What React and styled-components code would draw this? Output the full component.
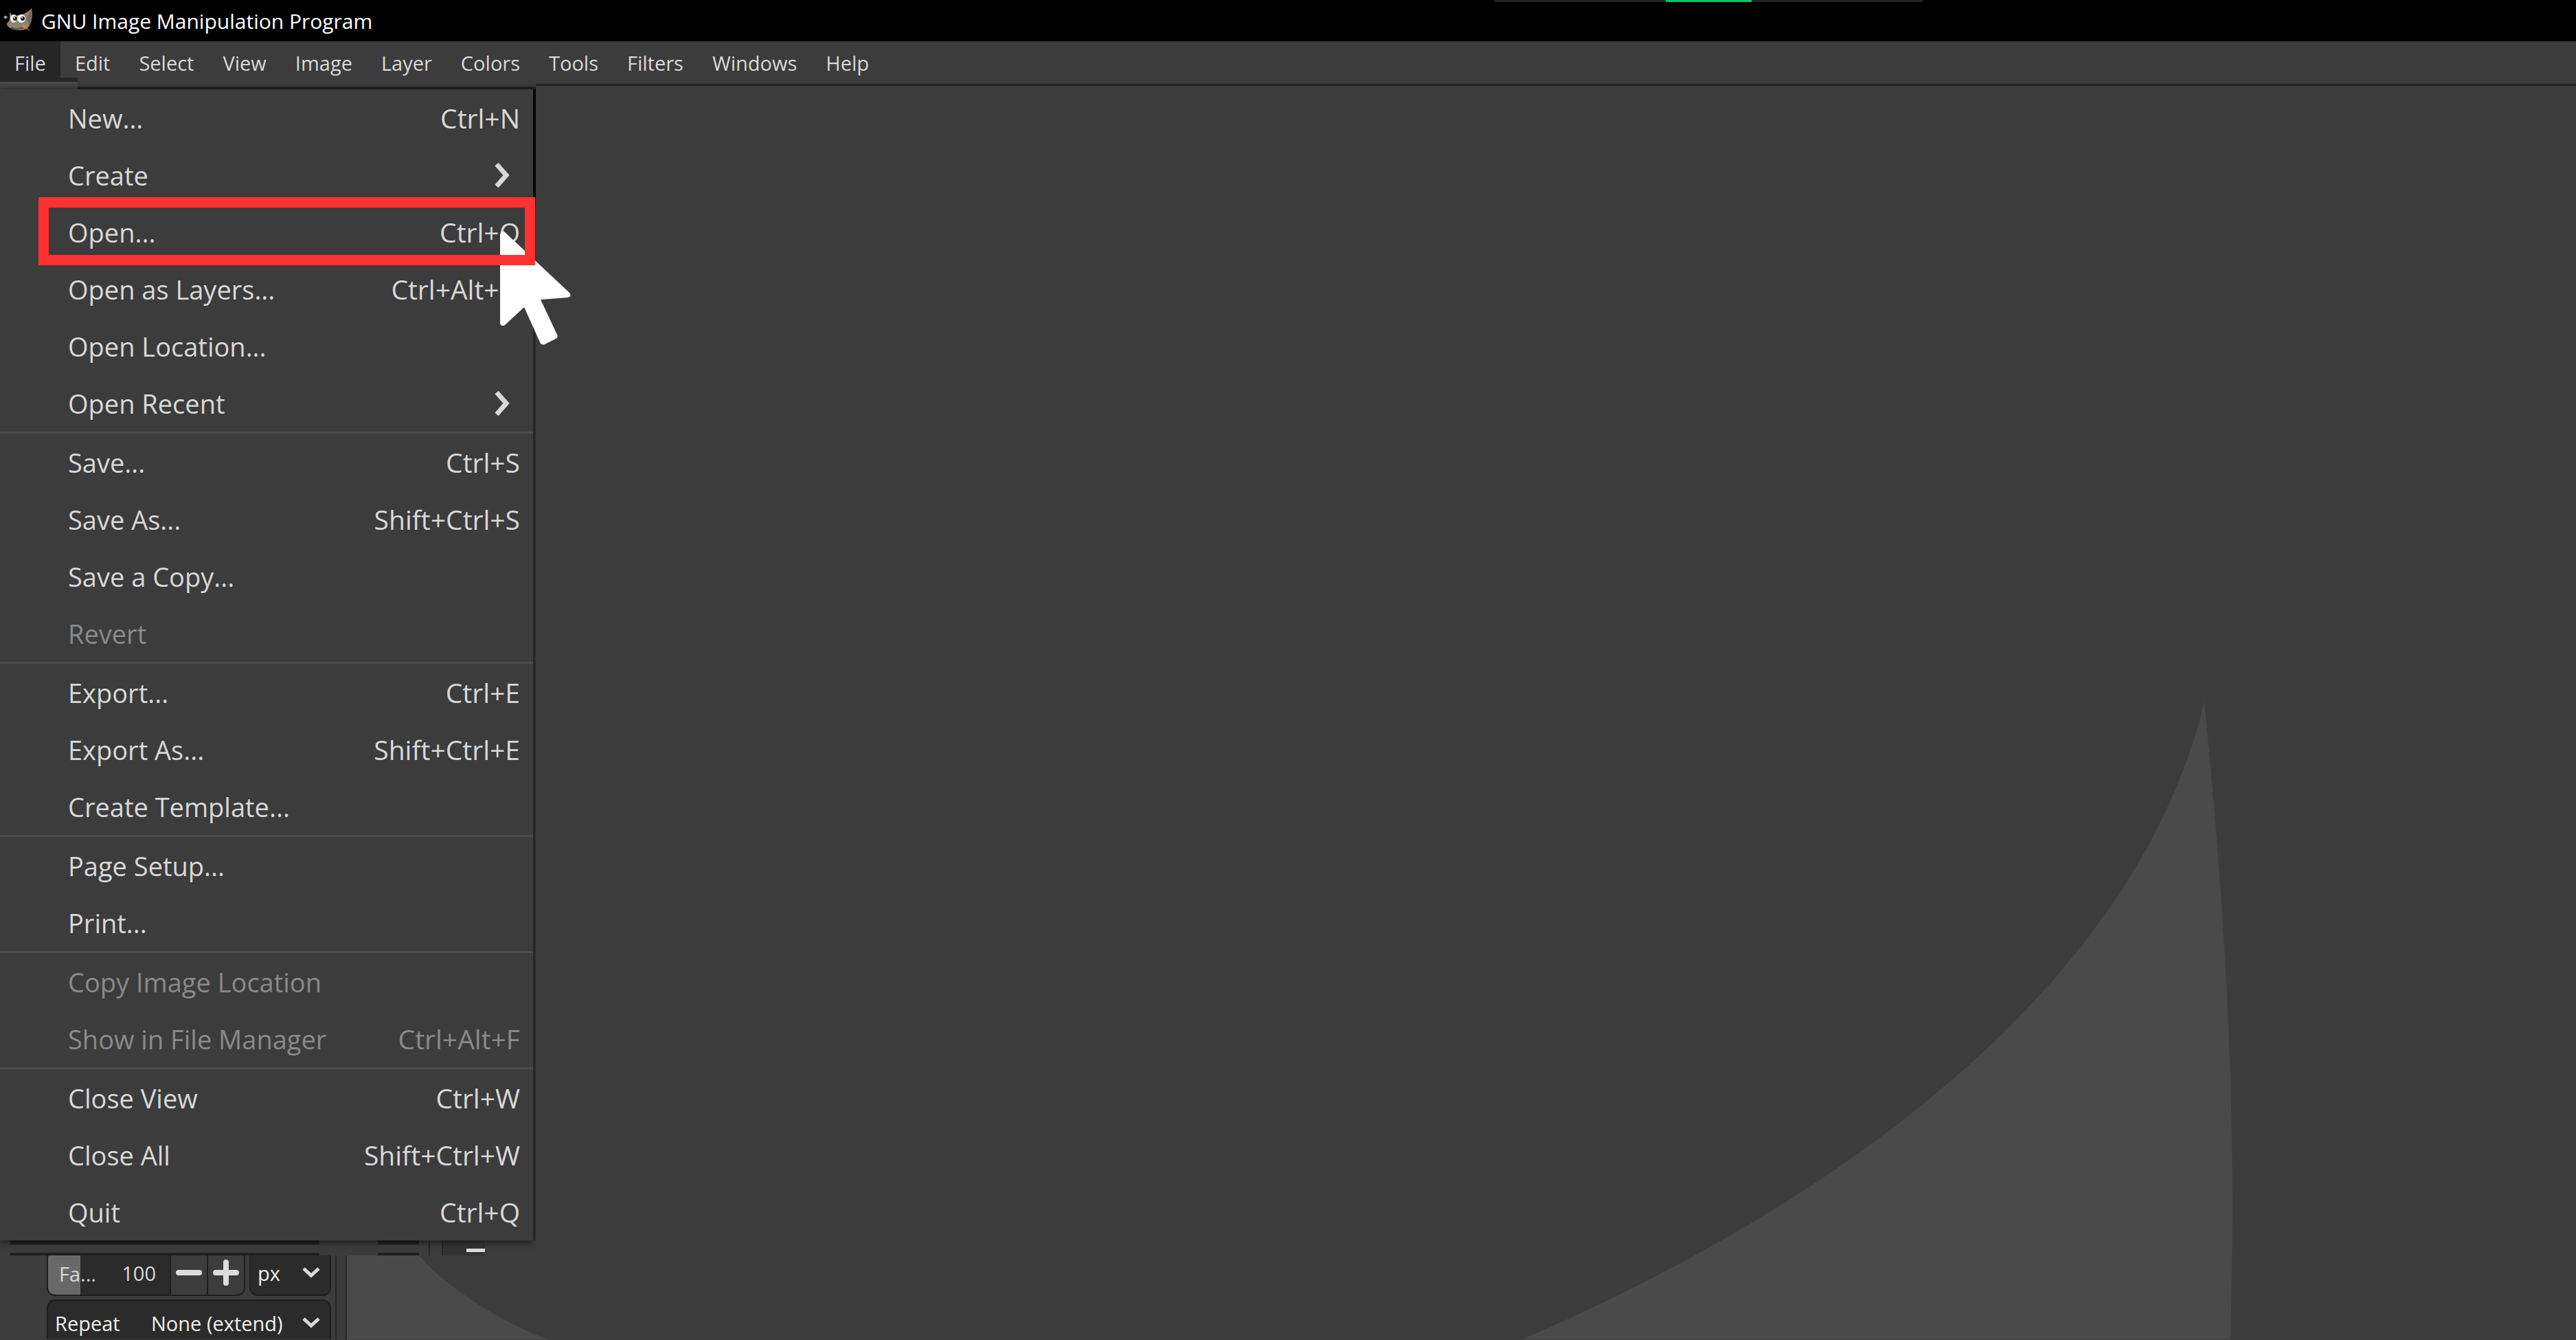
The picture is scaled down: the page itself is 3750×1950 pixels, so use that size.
import styled, { createGlobalStyle } from "styled-components";

const GlobalStyle = createGlobalStyle`
  * {
    box-sizing: border-box;
  }

  body {
    margin: 0;
    background: #3c3c3c;
    color: #d8d8d8;
    font-family: "Open Sans", "Noto Sans", sans-serif;
  }

  button,
  input,
  select {
    font-family: inherit;
    color: inherit;
    border: 0;
    margin: 0;
    padding: 0;
    background: none;
  }
`;

const Window = styled.div`
  position: relative;
  display: flex;
  flex-direction: column;
  height: 100vh;
  overflow: hidden;
  border-bottom: 1px solid #433b3e;
`;

const TitleBar = styled.header`
  display: flex;
  align-items: center;
  gap: 12px;
  height: 60px;
  flex-shrink: 0;
  padding-left: 4px;
  background: #000;
`;

const Title = styled.h1`
  margin: 0;
  font-size: 30px;
  font-weight: 400;
  color: #fff;
`;

// Recorder handle that peeks in over the top edge of the window
const Handle = styled.div`
  position: absolute;
  top: 0;
  left: 58%;
  width: 624px;
  height: 3px;
  background: #222;
`;

const HandleGrip = styled.div`
  width: 125px;
  height: 3px;
  margin: 0 auto;
  background: #05c768;
`;

const MenuBar = styled.nav`
  display: flex;
  height: 65px;
  flex-shrink: 0;
  border-bottom: 3px solid #222;
`;

const MenuBarItem = styled.button`
  padding: 0 21px;
  font-size: 29px;
  background: ${(props) => (props.$open ? "#262626" : "transparent")};
`;

// Everything that drops down from "File" hangs in this box
const Popup = styled.div`
  position: absolute;
  top: 113px;
  left: 0;
  width: 780px;
  overflow: hidden;
  background: #3c3c3c;
`;

const PopupHead = styled.div`
  display: flex;
  height: 17px;
`;

const HeadTab = styled.div`
  width: 113px;
  border-top: 6px solid #262626;
  background: linear-gradient(#4a4a4a, #3e3e3e);
`;

const HeadLine = styled.div`
  flex: 1;
  border-bottom: 4px solid #222;
`;

const MenuRow = styled.div`
  display: flex;
`;

const MenuEdge = styled.div`
  width: 4px;
  background: linear-gradient(#080808 160px, #333 172px);
`;

const Menu = styled.div`
  position: relative;
  flex: 1;
  box-shadow: 0 2px 10px rgba(0, 0, 0, 0.6);
`;

const Group = styled.div`
  & + & {
    border-top: 3px solid #4a4a4a;
  }
`;

const MenuItem = styled.button`
  position: relative;
  display: flex;
  align-items: center;
  justify-content: space-between;
  width: 100%;
  height: 83px;
  padding: 0 19px 0 99px;
  font-size: 38px;
  text-align: left;

  &:disabled {
    color: #8a8a8a;
  }
`;

const Shortcut = styled.span`
  font-size: 39px;
`;

const SubmenuIcon = styled.svg`
  width: 26px;
  height: 38px;
  margin-right: 12px;
`;

const Highlight = styled.span`
  position: absolute;
  inset: -9px -3px -7px 56px;
  z-index: 1;
  border: 15px solid #ff3131;
`;

const Pointer = styled.svg`
  position: absolute;
  top: 336px;
  left: 728px;
  width: 104px;
  height: 167px;
`;

// Slice of the tool options that stays visible right under the menu
const Peek = styled.div`
  display: flex;
  height: 22px;
  padding-left: 15px;
`;

const PeekField = styled.div`
  width: ${(props) => props.$width}px;
  margin-right: ${(props) => props.$gap}px;
  border: solid #202020;
  border-width: 6px 0 4px;
`;

const PeekSplit = styled.div`
  width: 21px;
  border: solid #272727;
  border-width: 0 2px;
`;

const PeekTab = styled.div`
  display: flex;
  align-items: center;
  justify-content: flex-end;
  width: 61px;
  padding-top: 6px;
  background: #343434;
`;

const PeekDash = styled.span`
  width: 27px;
  height: 5px;
  background: #dcdcdc;
`;

const Body = styled.div`
  display: flex;
  flex: 1;
  min-height: 0;
`;

const Dock = styled.aside`
  display: flex;
  flex-direction: column;
  justify-content: flex-end;
  gap: 5px;
  width: 490px;
  flex-shrink: 0;
  padding: 0 6px 0 68px;
  margin-bottom: -10px;
  border-right: 2px solid #262626;
  font-size: 29px;
`;

const OptionRow = styled.div`
  display: flex;
  justify-content: space-between;
  height: 68px;
`;

const SpinBox = styled.div`
  display: flex;
  width: 289px;
  overflow: hidden;
  border: 2px solid #1e1e1e;
  border-radius: 12px;
  background: linear-gradient(90deg, #686868 47px, #2b2b2b 47px);
`;

const SpinLabel = styled.label`
  width: 70px;
  padding-left: 16px;
  line-height: 68px;
`;

const SpinInput = styled.input`
  flex: 1;
  width: 0;
  padding-right: 20px;
  font-size: 29px;
  text-align: right;
`;

const SpinButton = styled.button`
  display: flex;
  align-items: center;
  justify-content: center;
  width: 54px;
  border-left: 2px solid #1e1e1e;
  background: #3c3c3c;
`;

const ComboBox = styled.div`
  position: relative;
  display: flex;
  align-items: center;
  width: ${(props) => props.$width};
  border: 2px solid #1e1e1e;
  border-radius: 12px;
  background: #2b2b2b;
  color: #f0f0f0;
`;

const ComboLabel = styled.label`
  width: 138px;
  padding-left: 10px;
`;

const ComboSelect = styled.select`
  flex: 1;
  width: 0;
  height: 100%;
  padding-left: ${(props) => props.$indent}px;
  font-size: 29px;
  appearance: none;
`;

const ComboArrow = styled.svg`
  position: absolute;
  right: 12px;
  width: 30px;
  height: 20px;
  pointer-events: none;
`;

const Gutter = styled.div`
  width: 15px;
  flex-shrink: 0;
  border-right: 2px solid #262626;
`;

const Canvas = styled.main`
  flex: 1;
  min-width: 0;
`;

const Backdrop = styled.svg`
  display: block;
  width: 100%;
  height: 100%;
`;

const menus = [
  "File",
  "Edit",
  "Select",
  "View",
  "Image",
  "Layer",
  "Colors",
  "Tools",
  "Filters",
  "Windows",
  "Help",
];

const fileMenu = [
  [
    { label: "New...", keys: "Ctrl+N" },
    { label: "Create", submenu: true },
    { label: "Open...", keys: "Ctrl+O", marked: true },
    { label: "Open as Layers...", keys: "Ctrl+Alt+O" },
    { label: "Open Location..." },
    { label: "Open Recent", submenu: true },
  ],
  [
    { label: "Save...", keys: "Ctrl+S" },
    { label: "Save As...", keys: "Shift+Ctrl+S" },
    { label: "Save a Copy..." },
    { label: "Revert", disabled: true },
  ],
  [
    { label: "Export...", keys: "Ctrl+E" },
    { label: "Export As...", keys: "Shift+Ctrl+E" },
    { label: "Create Template..." },
  ],
  [{ label: "Page Setup..." }, { label: "Print..." }],
  [
    { label: "Copy Image Location", disabled: true },
    { label: "Show in File Manager", keys: "Ctrl+Alt+F", disabled: true },
  ],
  [
    { label: "Close View", keys: "Ctrl+W" },
    { label: "Close All", keys: "Shift+Ctrl+W" },
    { label: "Quit", keys: "Ctrl+Q" },
  ],
];

const Wilber = () => (
  <svg width="44" height="36" viewBox="0 0 44 36" aria-hidden="true">
    <path
      d="M10 5 C12 9 14 11 18 11 C27 10 36 7 42 0 C44 11 42 21 38 27 C34 32 24 33 16 31 C10 29 5 26 6 22 C9 20 10 17 10 14 Z"
      fill="#8d8375"
    />
    <path d="M42 0 C40 7 37 12 34 14 C37 19 38 23 37 28 C42 21 44 11 42 0 Z" fill="#756c60" />
    <ellipse cx="16" cy="15" rx="5" ry="6" fill="#e8e8e8" />
    <ellipse cx="27" cy="15" rx="6" ry="6" fill="#f4f4f4" />
    <circle cx="18" cy="15" r="3" fill="#1a1a1a" />
    <circle cx="29" cy="15" r="3" fill="#1a1a1a" />
    <circle cx="17" cy="14" r="1" fill="#fff" />
    <circle cx="28" cy="14" r="1" fill="#fff" />
    <path d="M12 28 C18 31 24 31 30 28" stroke="#5d554a" strokeWidth="2" fill="none" />
    <path d="M29 25 L35 29" stroke="#d9852b" strokeWidth="4" />
    <path d="M35 29 L39 32" stroke="#6d6559" strokeWidth="2" />
    <circle cx="4" cy="13" r="2" fill="#d6d6d6" />
    <path d="M1 13 H8" stroke="#777" strokeWidth="1" />
  </svg>
);

const Arrow = () => (
  <ComboArrow viewBox="0 0 30 20" aria-hidden="true">
    <path d="M4 4 L15 14 L26 4" fill="none" stroke="#d8d8d8" strokeWidth="5" />
  </ComboArrow>
);

const FileMenu = () => (
  <Popup>
    <PopupHead>
      <HeadTab />
      <HeadLine />
    </PopupHead>
    <MenuRow>
      <Menu role="menu" aria-label="File">
        {fileMenu.map((items) => (
          <Group key={items[0].label} role="group">
            {items.map((item) => (
              <MenuItem key={item.label} role="menuitem" disabled={item.disabled}>
                <span>{item.label}</span>
                {item.keys && <Shortcut>{item.keys}</Shortcut>}
                {item.submenu && (
                  <SubmenuIcon viewBox="0 0 26 38" aria-hidden="true">
                    <path d="M4 3 L18 19 L4 35" fill="none" stroke="#d8d8d8" strokeWidth="7" />
                  </SubmenuIcon>
                )}
                {item.marked && <Highlight />}
              </MenuItem>
            ))}
          </Group>
        ))}
      </Menu>
      <MenuEdge />
    </MenuRow>
    <Peek>
      <PeekField $width={450} $gap={85} />
      <PeekField $width={60} $gap={14} />
      <PeekSplit />
      <PeekTab>
        <PeekDash />
      </PeekTab>
    </Peek>
  </Popup>
);

const App = () => {
  return (
    <Window>
      <GlobalStyle />
      <TitleBar>
        <Wilber />
        <Title>GNU Image Manipulation Program</Title>
        <Handle>
          <HandleGrip />
        </Handle>
      </TitleBar>

      <MenuBar>
        {menus.map((name) => (
          <MenuBarItem key={name} $open={name === "File"}>
            {name}
          </MenuBarItem>
        ))}
      </MenuBar>

      <Body>
        <Dock>
          <OptionRow>
            <SpinBox>
              <SpinLabel htmlFor="fade">Fa...</SpinLabel>
              <SpinInput id="fade" type="text" defaultValue="100" />
              <SpinButton aria-label="Decrease">
                <svg width="38" height="38" viewBox="0 0 38 38">
                  <path d="M4 19 H34" stroke="#dcdcdc" strokeWidth="8" strokeLinecap="round" />
                </svg>
              </SpinButton>
              <SpinButton aria-label="Increase">
                <svg width="38" height="38" viewBox="0 0 38 38">
                  <path d="M4 19 H34 M19 4 V34" stroke="#dcdcdc" strokeWidth="8" strokeLinecap="round" />
                </svg>
              </SpinButton>
            </SpinBox>
            <ComboBox $width="119px">
              <ComboSelect $indent={10} aria-label="Unit">
                <option>px</option>
              </ComboSelect>
              <Arrow />
            </ComboBox>
          </OptionRow>
          <OptionRow>
            <ComboBox $width="100%">
              <ComboLabel htmlFor="repeat">Repeat</ComboLabel>
              <ComboSelect id="repeat" $indent={12}>
                <option>None (extend)</option>
              </ComboSelect>
              <Arrow />
            </ComboBox>
          </OptionRow>
        </Dock>
        <Gutter />
        <Canvas>
          {/* big Wilber silhouette, most of it below the window's edge */}
          <Backdrop viewBox="505 125 3245 1825" preserveAspectRatio="xMidYMax slice" aria-hidden="true">
            <path d="M505 1700 C545 1750 575 1790 610 1828 C640 1865 720 1922 798 1950 H505 Z" fill="#4a4a4a" />
            <path
              d="M3209 1022 C3112 1428 2690 1746 2216 1950 H3247 C3254 1683 3250 1440 3209 1022 Z"
              fill="#4a4a4a"
            />
          </Backdrop>
        </Canvas>
      </Body>

      <FileMenu />
      <Pointer viewBox="0 0 104 167" aria-hidden="true">
        <path
          d="M0 5 Q1 0 6 1 L101 90 Q105 96 98 97 L59 100 L83 151 Q85 155 81 157 L65 165 Q60 167 58 162 L35 111 L7 137 Q1 140 0 134 Z"
          fill="#fff"
        />
      </Pointer>
    </Window>
  );
};

export default App;
